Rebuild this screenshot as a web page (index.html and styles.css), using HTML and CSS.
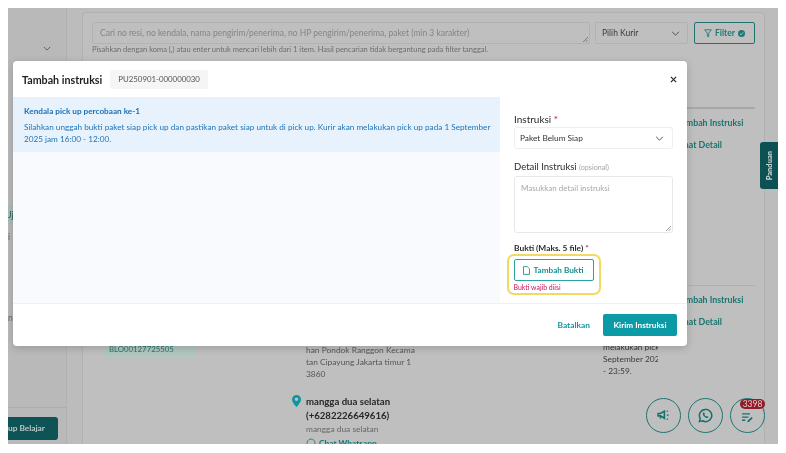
FILE: index.html
```
<!DOCTYPE html>
<html lang="id">
<head>
<meta charset="utf-8">
<title>Tambah instruksi</title>
<link rel="stylesheet" href="styles.css">
</head>
<body>
<div class="app">
  <aside class="side">
    <div class="side-top">
      <svg class="side-chev" width="8" height="5" viewBox="0 0 10 6"><path d="M1 1l4 4 4-4" fill="none" stroke="#555" stroke-width="1.1"/></svg>
    </div>
    <div class="side-frag side-frag-a">Jj</div>
    <div class="side-frag side-frag-b">i</div>
    <div class="side-frag side-frag-c">n</div>
    <div class="side-foot"><div class="learn">up Belajar</div></div>
  </aside>
  <main class="main">
    <section class="card">
      <div class="search-row">
        <div class="search-col">
          <div class="search-box">Cari no resi, no kendala, nama pengirim/penerima, no HP pengirim/penerima, paket (min 3 karakter)<svg class="grip" width="5" height="5" viewBox="0 0 5 5"><path d="M0 5l5-5M2.500 5L5 2.500" stroke="#666" stroke-width=".7"/></svg></div>
          <div class="search-hint">Pisahkan dengan koma (,) atau enter untuk mencari lebih dari 1 item. Hasil pencarian tidak bergantung pada filter tanggal.</div>
        </div>
        <div class="courier"><span>Pilih Kurir</span>
          <svg width="9" height="5" viewBox="0 0 10 6"><path d="M1 1l4 4 4-4" fill="none" stroke="#444" stroke-width="1.1"/></svg>
        </div>
        <div class="filter">
          <svg width="8" height="9" viewBox="0 0 9 10"><path d="M.8.8h7.400L5.300 4.600v4.200L3.700 8V4.600z" fill="none" stroke="#1b7a75" stroke-width="1"/></svg>
          <span>Filter</span>
          <svg width="7" height="7" viewBox="0 0 8 8"><circle cx="4" cy="4" r="4" fill="#1b7a75"/><path d="M2 4.100l1.500 1.400L6 2.800" fill="none" stroke="#c4c4c4" stroke-width="1"/></svg>
        </div>
      </div>
      <div class="result result-one">
        <div class="actions"><span>Tambah Instruksi</span><span>Lihat Detail</span></div>
      </div>
      <div class="result result-two">
        <div class="tag">BLO00127725505 <i class="tag-dash"></i></div>
        <div class="address">
          <div class="addr-line">han Pondok Ranggon Kecama</div>
          <div class="addr-line">tan Cipayung Jakarta timur 1</div>
          <div class="addr-line">3860</div>
          <div class="dest">
            <svg width="9" height="12" viewBox="0 0 9 12"><path fill-rule="evenodd" d="M4.500 0A4.400 4.400 0 0 0 0 4.400C0 7.400 4.500 12 4.500 12S9 7.400 9 4.400A4.400 4.400 0 0 0 4.500 0zm0 6.100a1.800 1.800 0 1 1 0-3.600 1.800 1.800 0 0 1 0 3.600z" fill="#0f96a0"/></svg>
            <div class="dest-text">
              <div class="dest-name">mangga dua selatan</div>
              <div class="dest-name">(+6282226649616)</div>
              <div class="dest-sub">mangga dua selatan</div>
              <div class="dest-chat">
                <svg width="10" height="10" viewBox="0 0 24 24"><path d="M12 2.500a9.500 9.500 0 0 0-8.200 14.300L2.500 21.500l4.800-1.300A9.500 9.500 0 1 0 12 2.500z" fill="none" stroke="#1b7a75" stroke-width="2"/></svg>
                <span>Chat Whatsapp</span>
              </div>
            </div>
          </div>
        </div>
        <div class="status">
          <div>melakukan pick</div>
          <div>September 2025</div>
          <div>- 23:59.</div>
        </div>
        <div class="actions"><span>Tambah Instruksi</span><span>Lihat Detail</span></div>
      </div>
    </section>
  </main>

  <div class="guide"><span>Panduan</span></div>

  <div class="fabs">
    <div class="fab">
      <svg width="14" height="11" viewBox="0 0 17 14"><path d="M1 4.500h3l5-3v9l-5-3H1z" fill="none" stroke="#14716d" stroke-width="2"/><path d="M3 8v3h2V8" fill="#14716d"/><path d="M12 2l1.500-1M12 6.500h2.500M12 11l1.500 1" stroke="#14716d" stroke-width="1.500" fill="none"/></svg>
    </div>
    <div class="fab">
      <svg width="15" height="15" viewBox="0 0 24 24"><path d="M12 2.200a9.800 9.800 0 0 0-8.400 14.800L2.300 21.700l4.900-1.300A9.800 9.800 0 1 0 12 2.200z" fill="none" stroke="#14716d" stroke-width="2.400"/><path d="M8.400 7.200c-.7.600-1 1.600-.7 2.700.6 2.400 3.300 5.200 6 5.900 1.200.3 2.200-.1 2.700-.9l.4-1-2.500-1.300-1 1.100c-1.300-.5-2.700-1.900-3.200-3.200l1-1-1.200-2.500z" fill="#14716d"/></svg>
    </div>
    <div class="fab">
      <svg class="fab-edit" width="14" height="11" viewBox="0 0 17 14"><path d="M1 2.500h10M1 6.500h8M1 10.500h4" stroke="#14716d" stroke-width="1.600" fill="none"/><path d="M7.500 13l.5-2 5-4.500 1.500 1.500L9.500 12.700z" fill="#14716d"/></svg>
      <span class="badge">3398</span>
    </div>
  </div>

  <div class="modal">
    <header class="modal-head">
      <h1>Tambah instruksi</h1>
      <span class="code">PU250901-000000030</span>
      <svg class="close" width="7" height="7" viewBox="0 0 8 8"><path d="M1 1l6 6M7 1L1 7" stroke="#222" stroke-width="1.300"/></svg>
    </header>
    <div class="modal-body">
      <div class="modal-left">
        <div class="alert">
          <div class="alert-title">Kendala pick up percobaan ke-1</div>
          <div class="alert-text">Silahkan unggah bukti paket siap pick up dan pastikan paket siap untuk di pick up. Kurir akan melakukan pick up pada 1 September 2025 jam 16:00 - 12:00.</div>
        </div>
      </div>
      <div class="modal-right">
        <label class="label">Instruksi <b>*</b></label>
        <div class="select"><span>Paket Belum Siap</span>
          <svg width="9" height="5" viewBox="0 0 10 6"><path d="M1 1l4 4 4-4" fill="none" stroke="#444" stroke-width="1.100"/></svg>
        </div>
        <label class="label label-detail">Detail Instruksi <small>(opsional)</small></label>
        <div class="textarea">Masukkan detail instruksi
          <svg class="grip" width="5" height="5" viewBox="0 0 5 5"><path d="M0 5l5-5M2.500 5L5 2.500" stroke="#777" stroke-width=".7"/></svg>
        </div>
        <label class="label label-proof">Bukti (Maks. 5 file) <b>*</b></label>
        <div class="proof">
          <div class="add-proof">
            <svg width="7" height="9" viewBox="0 0 8 10"><path d="M.6.600h4.300L7.400 3v6.400H.6z" fill="none" stroke="#178f8f" stroke-width="1"/></svg>
            <span>Tambah Bukti</span>
          </div>
          <div class="proof-error">Bukti wajib diisi</div>
        </div>
      </div>
    </div>
    <footer class="modal-foot">
      <span class="cancel">Batalkan</span>
      <span class="send">Kirim Instruksi</span>
    </footer>
  </div>
</div>
</body>
</html>
```

FILE: styles.css
```
* { box-sizing: border-box; }
html, body { background: #fff; }
body { margin: 8px; font-family: Lato, "Noto Sans", sans-serif; }

.app {
  position: relative;
  display: flex;
  width: 771px;
  height: 436px;
  overflow: hidden;
  background: #bcbcbc;
  filter: blur(0.35px);
}

/* background page */
.side {
  position: relative;
  display: flex;
  flex-direction: column;
  width: 59px;
  flex: none;
  background: #b9b9b9;
  border-right: 1px solid #b1b1b1;
}
.side-top { height: 48px; padding: 38px 0 0 35px; }
.side-chev { display: block; }
.side-frag { position: absolute; left: 0; font-size: 8.500px; color: #5a6a6a; line-height: 10px; }
.side-frag-a { top: 198px; width: 5px; height: 18px; padding-top: 4px; background: #a7bdb8; overflow: hidden; color: #2d5a58; }
.side-frag-b { top: 224px; }
.side-frag-c { top: 305px; }
.side-foot { margin-top: auto; height: 37px; border-top: 1px solid #adadad; padding-top: 9px; }
.learn {
  width: 50px;
  height: 23px;
  background: #0e5356;
  border-radius: 0 3px 3px 0;
  color: #b9c9c9;
  font-size: 8.300px;
  font-weight: 700;
  line-height: 23px;
  white-space: nowrap;
  padding-left: 0;
}

.main { flex: 1; padding: 4px 14px 0 15px; min-width: 0; }
.card {
  height: 100%;
  background: #bfbfbf;
  border: 1px solid #b1b1b1;
  border-bottom: 0;
  border-radius: 4px 4px 0 0;
  padding: 9px 9px 0;
}

.search-row { display: flex; gap: 5px; height: 85px; }
.search-col { width: 498px; }
.search-box {
  position: relative;
  height: 22px;
  border: 1px solid #b2b2b2;
  border-radius: 2px;
  background: #bfbfbf;
  padding: 0 7px;
  font-size: 8.500px;
  line-height: 20px;
  color: #858585;
  white-space: nowrap;
  overflow: hidden;
}
.search-hint { margin-top: 1px; font-size: 7.500px; line-height: 10px; color: #6d6d6d; white-space: nowrap; }
.courier {
  display: flex;
  align-items: center;
  justify-content: space-between;
  width: 93px;
  height: 22px;
  border: 1px solid #b2b2b2;
  border-radius: 2px;
  padding: 0 7px 0 6px;
  font-size: 8.500px;
  color: #3a3a3a;
}
.filter {
  display: flex;
  align-items: center;
  justify-content: center;
  gap: 3px;
  width: 61px;
  height: 22px;
  border: 1px solid #1f7470;
  border-radius: 2px;
  margin-left: 1px;
  font-size: 8.500px;
  font-weight: 700;
  color: #1b7a75;
}

.result { display: flex; border-top: 2px solid #a8a8a8; }
.result-one { height: 178px; justify-content: flex-end; }
.result-two { height: 160px; border-top-width: 1px; border-top-color: #b0b0b0; }

.actions {
  display: flex;
  flex: none;
  flex-direction: column;
  gap: 12px;
  width: 66px;
  padding-top: 9px;
  font-size: 8.800px;
  line-height: 10px;
  font-weight: 700;
  color: #187471;
  white-space: nowrap;
}
.result-one .actions { margin-right: 12px; }

.tag {
  flex: none;
  width: 92px;
  height: 18px;
  margin: 54px 0 0 11px;
  padding-left: 6px;
  background: #b1c6bf;
  border-radius: 2px;
  font-size: 7.800px;
  line-height: 18px;
  color: #26766a;
  white-space: nowrap;
}
.tag-dash { display: inline-block; width: 5px; height: 1px; margin-left: 9px; vertical-align: 6px; background: #3a6a60; }

.address { width: 125px; margin: 59px 0 0 97px; font-size: 8.400px; line-height: 11.800px; color: #555; flex: none; }
.addr-line { margin-left: 14px; white-space: nowrap; }
.dest { display: flex; gap: 5px; margin-top: 15px; }
.dest svg { flex: none; }
.dest-text { min-width: 0; }
.dest-name { font-size: 9.600px; line-height: 14px; font-weight: 700; color: #262626; white-space: nowrap; }
.dest-sub { font-size: 8.400px; line-height: 12px; color: #666; white-space: nowrap; }
.dest-chat { display: flex; align-items: center; gap: 3px; margin-top: 2px; font-size: 8.400px; line-height: 12px; color: #187471; font-weight: 700; white-space: nowrap; }

.status { width: 55px; margin: 55px 19px 0 186px; font-size: 8.400px; line-height: 12px; color: #3a3a3a; white-space: nowrap; overflow: hidden; flex: none; }

/* overlays */
.guide {
  position: absolute;
  top: 134px;
  right: 0;
  width: 19px;
  height: 47px;
  background: #0c5154;
  border-radius: 3px 0 0 3px;
  display: flex;
  align-items: center;
  justify-content: center;
}
.guide span {
  writing-mode: vertical-rl;
  transform: rotate(180deg);
  font-size: 7.500px;
  font-weight: 900;
  color: #c9d6d6;
}

.fabs { position: absolute; right: 14px; bottom: 11px; display: flex; gap: 7px; }
.fab {
  position: relative;
  display: flex;
  align-items: center;
  justify-content: center;
  width: 35px;
  height: 35px;
  border: 1.300px solid #1f7470;
  border-radius: 50%;
}
.fab-edit { margin-top: 4px; }
.badge {
  position: absolute;
  top: 0;
  left: 9px;
  width: 25px;
  height: 10px;
  background: #8e1d28;
  border-radius: 6px;
  color: #e8c9cb;
  font-size: 8.500px;
  line-height: 10px;
  text-align: center;
}

.modal {
  position: absolute;
  left: 5px;
  top: 53px;
  width: 674px;
  height: 285px;
  display: flex;
  flex-direction: column;
  background: #fff;
  border-radius: 4px;
  box-shadow: 0 2px 8px rgba(0, 0, 0, .18);
}
.modal-head { display: flex; align-items: center; height: 36px; padding: 0 10px 0 9px; flex: none; }
.modal-head h1 { margin: 0; font-size: 10.700px; font-weight: 700; color: #1d1d1d; white-space: nowrap; }
.code {
  margin-left: 8px;
  padding: 0 8px;
  height: 19px;
  background: #f5f5f5;
  border-radius: 2px;
  font-size: 7.850px;
  line-height: 19px;
  color: #555;
}
.close { margin-left: auto; }

.modal-body { display: flex; flex: none; height: 207px; border-bottom: 1px solid #eef0f3; }
.modal-left { width: 487px; flex: none; background: #f8fafe; }
.alert { height: 55px; background: #e7f2fc; padding: 8px 11px 0; color: #1f74b8; }
.alert-title { font-size: 8.200px; line-height: 12px; font-weight: 700; color: #1b6fb5; }
.alert-text { margin-top: 4px; font-size: 8.200px; line-height: 12px; width: 470px; }

.modal-right { flex: 1; padding: 16px 14px 0; min-width: 0; }
.label { display: block; font-size: 10px; line-height: 12px; color: #2b2b2b; }
.label b { color: #d0123f; font-weight: 500; }
.label small { font-size: 7.200px; line-height: 1; color: #a5a5a5; }
.select {
  display: flex;
  align-items: center;
  justify-content: space-between;
  height: 22px;
  margin-top: 2px;
  padding: 0 8px 0 5px;
  background: #fff;
  border: 1px solid #eceef1;
  border-radius: 3px;
  font-size: 8.300px;
  color: #333;
}
.label-detail { margin-top: 12px; font-size: 9.500px; }
.textarea {
  position: relative;
  height: 57px;
  margin-top: 3px;
  padding: 5px 6px;
  border: 1px solid #e6e8ec;
  border-radius: 3px;
  font-size: 8px;
  line-height: 12px;
  color: #a8a8a8;
}
.grip { position: absolute; right: 1px; bottom: 1px; }
.label-proof { margin-top: 9px; font-weight: 700; font-size: 8.400px; }
.proof {
  width: 94px;
  height: 41px;
  margin: 0 0 0 -7px;
  padding: 3px 0 0 4.500px;
  border: 2.500px solid #f4d95f;
  border-radius: 7px;
}
.add-proof {
  display: flex;
  align-items: center;
  justify-content: center;
  gap: 3px;
  width: 80px;
  height: 22px;
  border: 1px solid #2aa3a6;
  border-radius: 2px;
  font-size: 8.200px;
  font-weight: 700;
  color: #178f8f;
}
.proof-error { font-size: 6.900px; line-height: 10px; color: #c2185b; margin-top: 1px; white-space: nowrap; }

.modal-foot { display: flex; align-items: center; justify-content: flex-end; flex: 1; padding: 0 10px 0 0; gap: 13px; }
.cancel { font-size: 8.400px; font-weight: 700; color: #17959c; }
.send {
  width: 74px;
  height: 22px;
  background: #0b9aa6;
  border-radius: 2px;
  color: #fff;
  font-size: 8.200px;
  font-weight: 700;
  line-height: 22px;
  text-align: center;
  white-space: nowrap;
}
```
